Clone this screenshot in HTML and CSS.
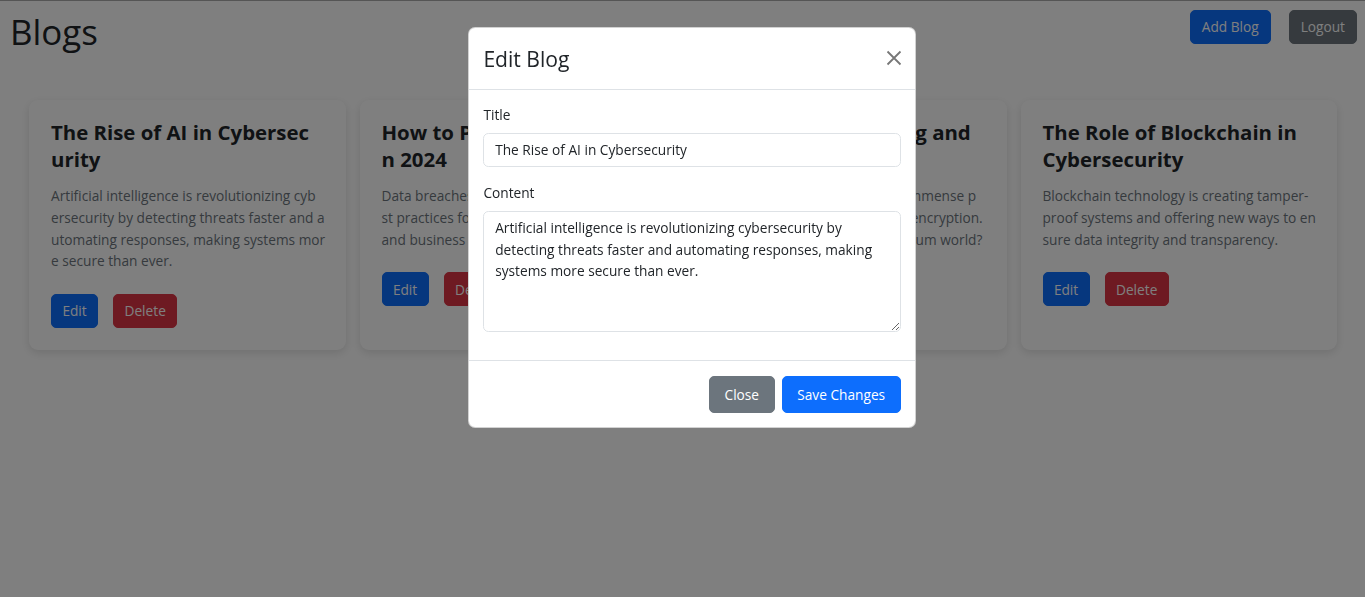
FILE: index.html
```html
<!DOCTYPE html>
<html lang="en">
<head>
<meta charset="utf-8">
<title>Blogs</title>
<link rel="stylesheet" href="styles.css">
</head>
<body>
<header class="topbar">
  <h1 class="page-title">Blogs</h1>
  <div class="top-actions">
    <button class="btn btn-primary">Add Blog</button>
    <button class="btn btn-secondary">Logout</button>
  </div>
</header>

<main class="cards">
  <article class="card">
    <h3 class="card-title">The Rise of AI in Cybersec<br>urity</h3>
    <p class="card-text">Artificial intelligence is revolutionizing cyb<br>ersecurity by detecting threats faster and a<br>utomating responses, making systems mor<br>e secure than ever.</p>
    <div class="card-actions">
      <button class="btn btn-primary">Edit</button>
      <button class="btn btn-danger">Delete</button>
    </div>
  </article>
  <article class="card">
    <h3 class="card-title">How to Protect Your Data i<br>n 2024</h3>
    <p class="card-text">Data breaches are on the rise. Learn the be<br>st practices for safeguarding your personal<br>and business data.</p>
    <div class="card-actions">
      <button class="btn btn-primary">Edit</button>
      <button class="btn btn-danger">Delete</button>
    </div>
  </article>
  <article class="card">
    <h3 class="card-title">Quantum Computing and<br>Encryption</h3>
    <p class="card-text">Quantum computers promise immense p<br>ower but threatens all modern encryption.<br>Are we ready for the post-quantum world?</p>
    <div class="card-actions">
      <button class="btn btn-primary">Edit</button>
      <button class="btn btn-danger">Delete</button>
    </div>
  </article>
  <article class="card">
    <h3 class="card-title">The Role of Blockchain in<br>Cybersecurity</h3>
    <p class="card-text">Blockchain technology is creating tamper-<br>proof systems and offering new ways to en<br>sure data integrity and transparency.</p>
    <div class="card-actions">
      <button class="btn btn-primary">Edit</button>
      <button class="btn btn-danger">Delete</button>
    </div>
  </article>
</main>

<div class="backdrop"></div>

<div class="modal" role="dialog" aria-labelledby="editTitle">
  <div class="modal-header">
    <h4 class="modal-title" id="editTitle">Edit Blog</h4>
    <button class="btn-close" aria-label="Close">
      <svg viewBox="0 0 16 16" width="16" height="16"><path d="M1.5 1.5 L14.5 14.5 M14.5 1.5 L1.5 14.5" stroke="currentColor" stroke-width="1.8" fill="none"/></svg>
    </button>
  </div>
  <div class="modal-body">
    <div class="field">
      <label class="form-label" for="t">Title</label>
      <input class="form-control" id="t" type="text" value="The Rise of AI in Cybersecurity">
    </div>
    <div class="field">
      <label class="form-label" for="c">Content</label>
      <textarea class="form-control" id="c" rows="5">Artificial intelligence is revolutionizing cybersecurity by detecting threats faster and automating responses, making systems more secure than ever.</textarea>
    </div>
  </div>
  <div class="modal-footer">
    <button class="btn btn-secondary btn-lg">Close</button>
    <button class="btn btn-primary btn-lg">Save Changes</button>
  </div>
</div>
</body>
</html>
```
FILE: styles.css
```css
* { box-sizing: border-box; }

html, body { height: 100%; }

body {
  margin: 0;
  border-top: 1px solid #aaaaaa;
  background: #ffffff;
  color: #212529;
  font-family: "Open Sans", "Noto Sans", sans-serif;
  font-size: 13.7px;
  line-height: 21.6px;
  overflow: hidden;
}

.topbar {
  display: flex;
  justify-content: space-between;
  align-items: flex-start;
  height: 99px;
  padding: 9px 8px 0 10px;
}

.page-title {
  margin: 1px 0 0;
  font-size: 34.9px;
  font-weight: 400;
  line-height: 42px;
}

.top-actions {
  display: flex;
  gap: 18px;
}

.btn {
  font-family: inherit;
  font-size: 13.7px;
  line-height: 21.6px;
  padding: 5.2px 10.8px;
  border: 1px solid transparent;
  border-radius: 5px;
  color: #ffffff;
  cursor: pointer;
}

.btn-primary { background: #0d6efd; border-color: #0d6efd; }
.btn-secondary { background: #6c757d; border-color: #6c757d; }
.btn-danger { background: #dc3545; border-color: #dc3545; }

.btn-lg {
  padding: 7px 14.5px;
}

.top-actions .btn { padding: 5.2px 11px; }
.top-actions .btn-primary { margin-left: -2px; }

.cards {
  display: grid;
  grid-template-columns: repeat(4, 1fr);
  gap: 14px;
  padding: 0 28px 0 29px;
}

.card {
  height: 250px;
  background: #ffffff;
  border-radius: 9px;
  box-shadow: 0 3px 10px rgba(0, 0, 0, 0.12);
  padding: 19px 22px 22px;
  overflow: hidden;
}

.card-title {
  margin: 0 0 13px;
  font-size: 20.4px;
  font-weight: 700;
  line-height: 26.7px;
  white-space: nowrap;
}

.card-text {
  margin: 0 0 22.2px;
  color: #6c757d;
  white-space: nowrap;
}

.card-actions {
  display: flex;
  gap: 15px;
}

.card-actions .btn { padding: 5.2px 10.4px; }

.backdrop {
  position: fixed;
  inset: 0;
  background: rgba(0, 0, 0, 0.5);
}

.modal {
  position: fixed;
  left: 468px;
  top: 27px;
  width: 448px;
  background: #ffffff;
  border: 1px solid rgba(0, 0, 0, 0.175);
  border-radius: 7.2px;
  overflow: hidden;
}

.modal-header {
  display: flex;
  align-items: center;
  justify-content: space-between;
  padding: 14px 14.4px 14.4px;
  border-bottom: 1px solid #dee2e6;
}

.modal-title {
  margin: 1px 0 -1px;
  font-size: 21.1px;
  font-weight: 400;
  line-height: 32.4px;
}

.btn-close {
  display: flex;
  align-items: center;
  justify-content: center;
  width: 24px;
  height: 24px;
  padding: 0;
  margin-right: -5px;
  border: 0;
  background: transparent;
  color: #777777;
  cursor: pointer;
}

.modal-body {
  padding: 14.4px;
}

.field { margin-bottom: 14.4px; }

.form-label {
  display: block;
  margin-bottom: 7.2px;
}

.form-control {
  display: block;
  width: 100%;
  font-family: inherit;
  font-size: 13.7px;
  line-height: 21.6px;
  color: #212529;
  padding: 5.4px 10.8px;
  border: 1px solid #dee2e6;
  border-radius: 5.4px;
  background: #ffffff;
}

textarea.form-control {
  height: 121px;
  resize: vertical;
}

.modal-footer {
  display: flex;
  justify-content: flex-end;
  gap: 7.2px;
  padding: 14.4px 14.4px 13.6px;
  border-top: 1px solid #dee2e6;
}
```
